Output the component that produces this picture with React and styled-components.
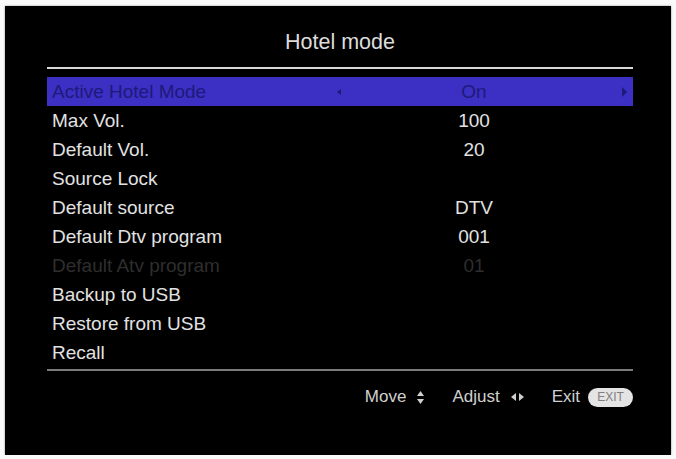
import React from 'react';
import styled, { createGlobalStyle } from 'styled-components';

const GlobalStyle = createGlobalStyle`
  html, body {
    margin: 0;
    padding: 0;
    background: #fafafa;
  }
  body {
    font-family: "Liberation Sans", Arial, sans-serif;
  }
`;

const items = [
  { label: 'Active Hotel Mode', value: 'On', active: true },
  { label: 'Max Vol.', value: '100' },
  { label: 'Default Vol.', value: '20' },
  { label: 'Source Lock', value: '' },
  { label: 'Default source', value: 'DTV' },
  { label: 'Default Dtv program', value: '001' },
  { label: 'Default Atv program', value: '01', disabled: true },
  { label: 'Backup to USB', value: '' },
  { label: 'Restore from USB', value: '' },
  { label: 'Recall', value: '' },
];

const Triangle = ({ dir = 'right', w = 6, h = 10, color = '#1e1a7a' }) => {
  const pts = {
    right: `0,0 ${w},${h / 2} 0,${h}`,
    left: `${w},0 0,${h / 2} ${w},${h}`,
    up: `0,${h} ${w / 2},0 ${w},${h}`,
    down: `0,0 ${w},0 ${w / 2},${h}`,
  }[dir];
  return (
    <svg width={w} height={h} viewBox={`0 0 ${w} ${h}`}>
      <polygon points={pts} fill={color} />
    </svg>
  );
};

const App = () => (
  <>
    <GlobalStyle />
    <Screen>
      <Title>Hotel mode</Title>
      <Divider />
      <List>
        {items.map((item) => (
          <Row key={item.label} active={item.active} disabled={item.disabled}>
            <Label>{item.label}</Label>
            <ArrowCell>{item.active && <Triangle dir="left" w={4} h={6} />}</ArrowCell>
            <Value>{item.value}</Value>
            <ArrowCell $end>{item.active && <Triangle dir="right" w={5} h={10} />}</ArrowCell>
          </Row>
        ))}
      </List>
      <Divider $dim />
      <Footer>
        <Hint>
          Move
          <Stack>
            <Triangle dir="up" w={7} h={5} color="#cfcfcf" />
            <Triangle dir="down" w={7} h={5} color="#cfcfcf" />
          </Stack>
        </Hint>
        <Hint>
          Adjust
          <Pair>
            <Triangle dir="left" w={5} h={8} color="#cfcfcf" />
            <Triangle dir="right" w={5} h={8} color="#cfcfcf" />
          </Pair>
        </Hint>
        <Hint $tight>
          Exit
          <ExitPill>EXIT</ExitPill>
        </Hint>
      </Footer>
    </Screen>
  </>
);

const Screen = styled.div`
  box-sizing: border-box;
  width: 666px;
  height: 449px;
  margin: 6px 0 0 5px;
  background: #000;
  padding: 0 38px 0 42px;
  display: flex;
  flex-direction: column;
  box-shadow: 0 0 2px rgba(0, 0, 0, 0.4);
`;

const Title = styled.div`
  padding-top: 24px;
  height: 24px;
  line-height: 24px;
  font-size: 21.5px;
  color: #dcdcdc;
  text-align: center;
`;

const Divider = styled.div`
  height: 2px;
  margin-top: ${({ $dim }) => ($dim ? '2px' : '13px')};
  background: ${({ $dim }) => ($dim ? '#7a7a7a' : '#d8d8d8')};
`;

const List = styled.div`
  margin-top: 8px;
  display: flex;
  flex-direction: column;
`;

const Row = styled.div`
  display: grid;
  grid-template-columns: 290px 12px 250px 34px;
  align-items: center;
  height: 29px;
  font-size: 19px;
  color: ${({ active, disabled }) => (active ? '#1e1a7a' : disabled ? '#2e2e2e' : '#e2e2e2')};
  background: ${({ active }) => (active ? '#3b2fc4' : 'transparent')};
`;

const Label = styled.div`
  padding-left: 5px;
  white-space: nowrap;
`;

const ArrowCell = styled.div`
  display: flex;
  align-items: center;
  justify-content: ${({ $end }) => ($end ? 'flex-end' : 'flex-start')};
  padding-right: ${({ $end }) => ($end ? '6px' : '0')};
`;

const Value = styled.div`
  text-align: center;
`;

const Footer = styled.div`
  display: flex;
  justify-content: flex-end;
  align-items: center;
  gap: 28px;
  height: 52px;
  font-size: 17px;
  color: #d0d0d0;
`;

const Hint = styled.div`
  display: flex;
  align-items: center;
  gap: ${({ $tight }) => ($tight ? '8px' : '11px')};
`;

const Stack = styled.div`
  display: flex;
  flex-direction: column;
  gap: 3px;
`;

const Pair = styled.div`
  display: flex;
  gap: 3px;
`;

const ExitPill = styled.span`
  display: inline-flex;
  align-items: center;
  justify-content: center;
  width: 45px;
  height: 19px;
  border-radius: 10px;
  background: #e4e4e4;
  color: #808080;
  font-size: 12px;
`;

export default App;
